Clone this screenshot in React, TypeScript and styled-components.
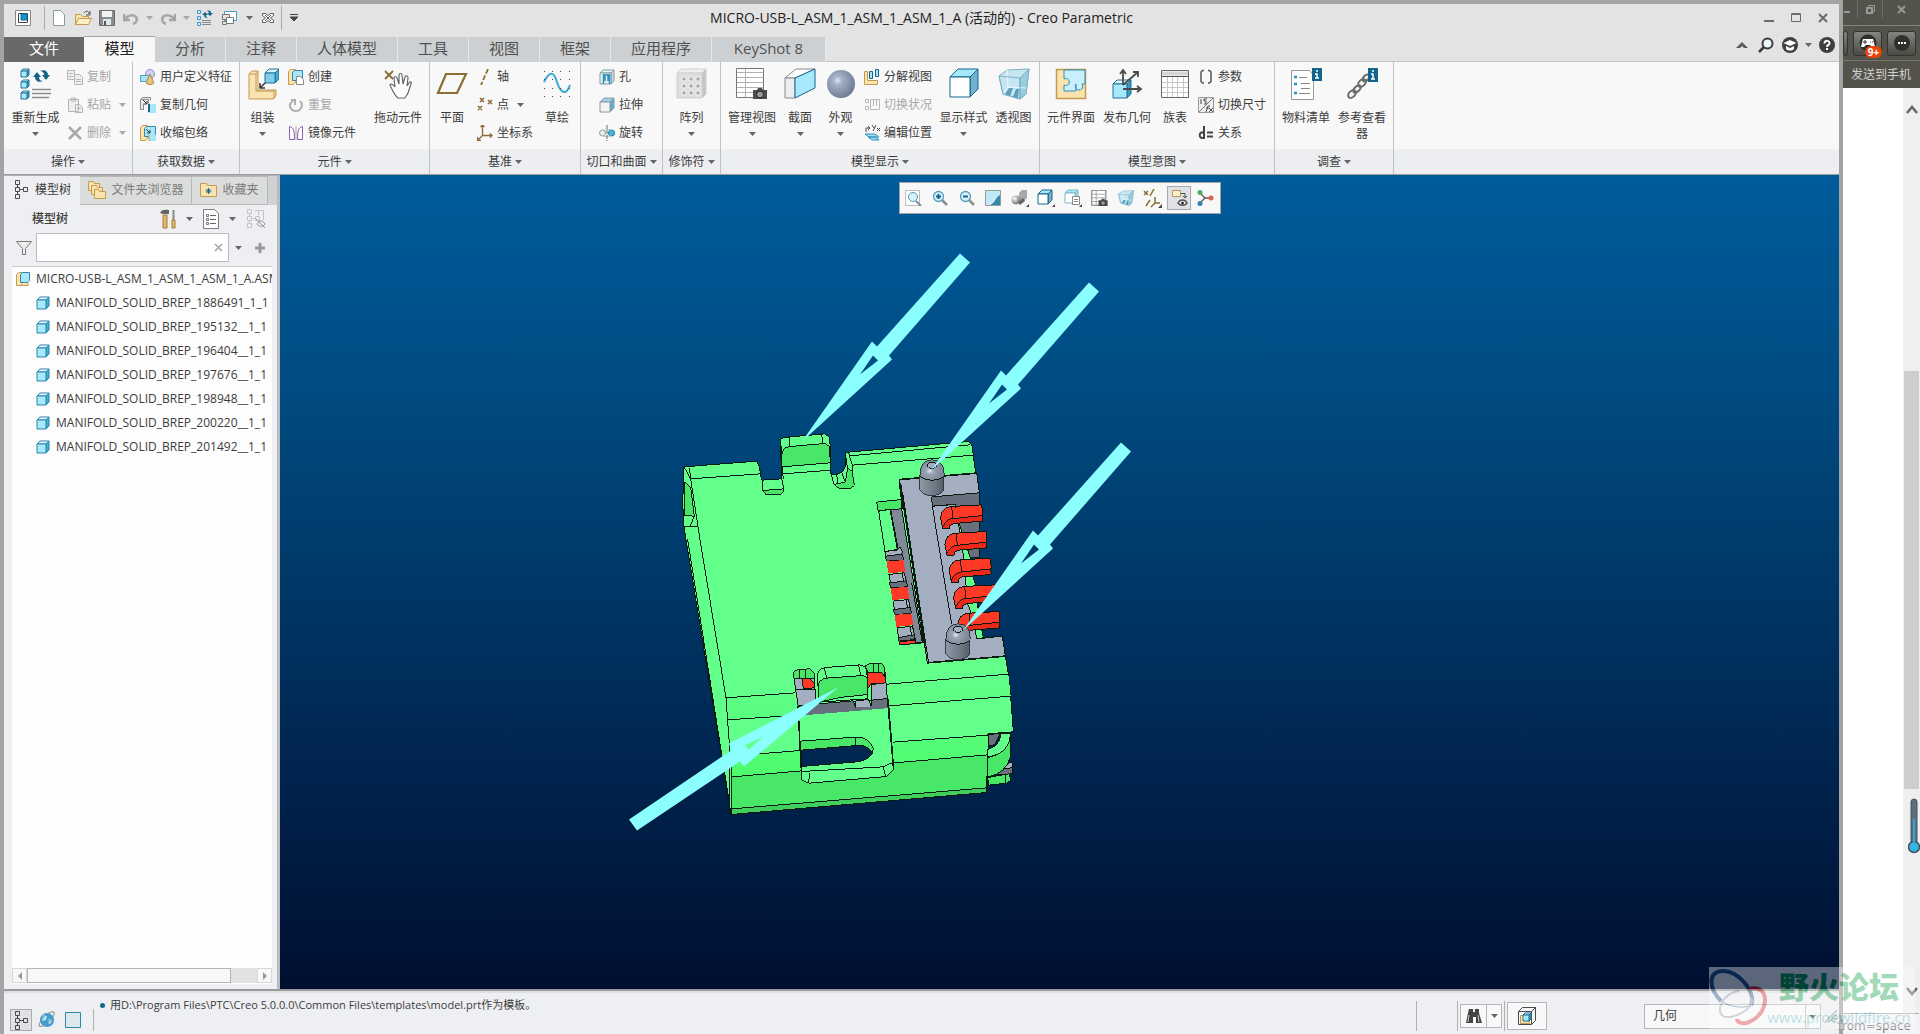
import React from 'react';
import styled, { createGlobalStyle } from 'styled-components';

const GlobalStyle = createGlobalStyle`
  *, *::before, *::after { box-sizing: border-box; }
  body { margin: 0; overflow: hidden; }
  body, button, input, select {
    font-family: "Open Sans", "Noto Sans CJK SC", sans-serif;
    font-size: 12px;
    line-height: 16px;
    color: #3c3c3c;
  }
  button { border: 0; padding: 0; background: none; cursor: default; }
  ul { list-style: none; margin: 0; padding: 0; }
  svg { display: block; flex: none; }
`;

/* ---------- icons ---------- */

type CubeProps = { x: number; y: number; w: number; d: number; f?: string; t?: string; r?: string; s?: string; sw?: number };
const Cube = ({ x, y, w, d, f = '#a8e8fa', t = '#e2f7fe', r = '#46acd2', s = '#1f7396', sw = 1 }: CubeProps) => (
  <g stroke={s} strokeWidth={sw} strokeLinejoin="round">
    <path d={`M${x} ${y + d}l${d} ${-d}h${w}l${-d} ${d}z`} fill={t} />
    <path d={`M${x + w} ${y + d}l${d} ${-d}v${w}l${-d} ${d}z`} fill={r} />
    <path d={`M${x} ${y + d}h${w}v${w}h${-w}z`} fill={f} />
  </g>
);

const sand = { fill: '#fbe3b0', stroke: '#c29a50' };
const line = { fill: 'none', stroke: '#4a4a4a' };
const brown = '#8b6c33';
const blue = '#14658a';
const Camera = () => (
  <g><path d="M18 22h4l1-2h4l1 2h4v9H18z" fill="#4c4c4c" /><circle cx="25" cy="26.500" r="3.500" fill="#999" stroke="#222" /></g>
);
const Lens = ({ sign = '' }: { sign?: string }) => (
  <g fill="none">
    <path d="M10 10l5 5" stroke="#8d8d8d" strokeWidth="2.500" />
    <circle cx="6.500" cy="6.500" r="5" fill="#d9f1fb" stroke="#5b9fc0" strokeWidth="1.300" />
    {sign && <path d={sign} stroke={blue} strokeWidth="2" />}
  </g>
);
const Nodes = ({ c = '#4a4a4a' }: { c?: string }) => (
  <g fill="none" stroke={c}><path d="M2.500.500h4v4h-4zM2.500 7.500h4v4h-4zM2.500 14.500h4v4h-4zM10.500 7.500h4v4h-4z" /><path d="M4.500 5v2M4.500 12v2M7 9.500h3" /></g>
);
const Glass = () => (
  <g stroke="#7fb0c6" strokeLinejoin="round">
    <path d="M1 8L9 2l22-1-3 25-6 5-17-5z" fill="#c6e6f2" />
    <path d="M22 10l9-9-3 25-6 5z" fill="#9accdf" />
    <path d="M9 2l1 17 18 1M10 19l-5 7" fill="none" stroke="#eafaff" />
    <path d="M1 8l21 2v21L5 26zM22 10l9-9" fill="none" />
    <path d="M7 26l4-6h4l-3 8zM15 29l3-8h3l-1 9z" fill="#5f9fbb" stroke="none" />
  </g>
);

const icons: Record<string, [number, number, React.ReactNode]> = {
  app: [16, 16, <g><path d="M.5.500h15v15H.5z" fill="#fff" stroke="#888" /><path d="M3.500 3.500h9v9h-9z" fill="none" stroke="#444" /><path d="M6 4h6v6H6z" fill="#0a9be0" stroke="#17648c" /></g>],
  newFile: [16, 18, <path d="M2.500 1.500h7l4 4v11h-11z" fill="#fff" stroke="#8a9aa5" />],
  open: [18, 18, <g><path d="M1.500 5.500h5l2 2h6v8h-13z" {...sand} /><path d="M1.500 15.500l3-6h13l-3 6z" fill="#fdeec6" stroke="#c29a50" /><path d="M10 4c2-3 5-2 5 1M16 2v4h-4" {...line} /></g>],
  save: [16, 16, <g><path d="M.5.500h15v15H.5z" fill="#8c8c8c" stroke="#6b6b6b" /><path d="M3 1h10v6H3z" fill="#f2f2f2" /><path d="M4 9h8v6H4z" fill="#dce8ee" /><path d="M5 11h2v4H5z" fill="#555" /></g>],
  undo: [16, 14, <path d="M1 3v6h6M2 8c3-4 8-5 11-2 2 3 0 6-3 7" fill="none" stroke="#a5a5a5" strokeWidth="2.500" />],
  redo: [16, 14, <path d="M15 3v6H9M14 8C11 4 6 3 3 6c-2 3 0 6 3 7" fill="none" stroke="#a5a5a5" strokeWidth="2.500" />],
  regenSmall: [16, 16, <g><path d="M.5.500h3v3h-3zM.5 6.500h3v3h-3zM.5 12.500h3v3h-3z" fill="#cdf0fc" stroke="#3a9cc6" /><path d="M5 10.500h9M5 12.500h9M5 14.500h9" stroke="#888" /><path d="M5 5l3-3 3 3H9c0 2 1 2 2 3-3 0-4-1-4-3zM16 3l-3 3-3-3h2c0-1-1-2-2-2 3-1 4 0 4 2z" fill={blue} /></g>],
  windows: [16, 16, <g stroke="#777"><path d="M3.500 1.500h12v9h-12z" fill="#fff" stroke="#45a3c8" /><path d="M1.500 4.500h7v5h-7zM1.500 11.500h4v3h-4z" fill="#e5e5e5" /><path d="M5.500 7.500h7v6h-7z" fill="#fff" /></g>],
  closeWin: [14, 12, <path d="M1.500 1.500h3l2.500 2 2.500-2h3v2l-3 2.500 3 2.500v2h-3L7 8.500l-2.500 2h-3v-2l3-2.500-3-2.500zM4 3l6 6M10 3L4 9" fill="#fff" stroke="#5a5a5a" />],
  customize: [10, 8, <path d="M1 .5h8M1 3h8L5 7z" fill="#444" stroke="#444" />],
  min: [10, 10, <path d="M0 8h10" stroke="#6b6b6b" strokeWidth="2" />],
  max: [12, 10, <path d="M1.500.500h9v8h-9zM1 1.500h10" fill="none" stroke="#6b6b6b" />],
  close: [10, 10, <path d="M1 1l8 8M9 1L1 9" stroke="#6b6b6b" strokeWidth="2" />],
  collapse: [12, 8, <path d="M0 7l6-6 6 6H8L6 5 4 7z" fill="#5a5a5a" />],
  search: [16, 16, <g><circle cx="9.500" cy="6.500" r="5" fill="#eef6fa" stroke="#3a3a3a" strokeWidth="2" /><path d="M6 10l-5 5" stroke="#3a3a3a" strokeWidth="2.500" /></g>],
  learn: [16, 16, <g><circle cx="8" cy="8" r="8" fill="#3f3f3f" /><path d="M1.500 6L8 3l6.500 3L8 9z" fill="#fff" /><path d="M4 9l4 2 4-2v3c-2 2-6 2-8 0z" fill="#fff" /></g>],
  help: [16, 16, <g><circle cx="8" cy="8" r="8" fill="#3f3f3f" /><path d="M5.500 6.500c0-4 5.500-3 5 0-.5 1.500-2.500 1.500-2.500 3.500M8 11v2" fill="none" stroke="#fff" strokeWidth="2" /></g>],

  regen: [32, 32, <g><Cube x={1} y={1} w={6} d={2} /><Cube x={1} y={12} w={6} d={2} /><Cube x={1} y={23} w={6} d={2} /><path d="M12 21.500h19M12 25.500h19M12 29.500h17" stroke="#8c8c8c" strokeWidth="1.500" /><path d="M13 9l4-5 4 5h-2c0 3 2 4 4 4-4 2-8 0-8-4zM30 7l-4 5-4-5h2c0-3-2-4-4-4 4-2 8 0 8 4z" fill={blue} /></g>],
  copy: [16, 16, <g fill="#eee" stroke="#b5b5b5"><path d="M.5 1.500h7v9h-7zM7.500 5.500h5l3 3v7h-8z" /><path d="M2 4.500h4M2 7.500h4M9 10.500h5M9 12.500h5" /></g>],
  paste: [16, 16, <g fill="#eee" stroke="#b5b5b5"><path d="M1.500 2.500h10v12h-10zM4.500 1h4v3h-4zM8.500 7.500h4l3 3v5h-7z" /><path d="M10 11.500h4" /></g>],
  remove: [16, 16, <path d="M2 2l12 12M14 2L2 14" stroke="#a8a8a8" strokeWidth="2.500" />],
  udf: [16, 16, <g><circle cx="10" cy="5" r="4.500" fill="#cfd2f4" stroke="#8890c4" /><path d="M.5 6.500h9v6h-9z" fill="#a8e2f6" stroke="#4aa0c0" /><path d="M10 5l4 9c-2 2-6 2-8 0z" fill="#e4c385" stroke="#b08c48" /></g>],
  copyGeom: [16, 16, <g><path d="M.5 2.500l2-2h8v3M.5 2.500h8v4M.5 2.500v10h3v-6" fill="#e9e9e9" stroke="#8b8b8b" /><path d="M3 3l4 4M7 4v3H4" stroke="#333" fill="none" /><path d="M8 7h8v9H8z" fill="#a8e6fa" /><path d="M9 7v8" stroke={blue} strokeWidth="2" /></g>],
  shrink: [16, 16, <g><path d="M.5 2.500l2-2h5v13l-2 2h-5z" {...sand} /><path d="M4.500 3.500l2-2h9v8l-2 2h-9z" fill="#a8e6fa" stroke="#3789aa" /><path d="M6 4l4 4M10 5v3H7" stroke="#333" fill="none" /><path d="M9 10h7v6H9z" fill="#a8e6fa" /><path d="M9 10v6" stroke="#c29a50" /></g>],
  assemble: [32, 32, <g strokeLinejoin="round"><path d="M2 6l3-3h6v19h18v6l-3 3H2z" {...sand} /><path d="M2 6h7v17h18v8M9 6l2-3M9 23l2-1M27 23l2-1" fill="none" stroke="#c29a50" /><Cube x={18} y={1} w={10} d={4} f="#7fcdea" /><path d="M18 15l-4 4M13 15v5h5" fill="none" stroke="#333" strokeWidth="1.500" /></g>],
  create: [16, 16, <g><path d="M.5 2.500l2-2h5v13l-2 2h-5z" {...sand} /><path d="M4.500 3.500l2-2h8v8l-2 2h-8z" fill="#a8e6fa" stroke="#3789aa" /><path d="M8.500 7.500h4l3 3v5h-7z" fill="#fff" stroke="#8a8a8a" /></g>],
  repeat: [16, 16, <path d="M5 4c-6 4-2 10 3 10s8-6 4-10M3 3h4v5" fill="none" stroke="#b0b0b0" strokeWidth="2" />],
  mirror: [16, 16, <g fill="#fff" stroke="#8a5fb0"><path d="M1.500 1.500c4 1 5 4 5 13h-5zM14.500 1.500c-4 1-5 4-5 13h5z" /><path d="M8 1v14" stroke="#aaa" /></g>],
  drag: [32, 32, <g><path d="M3 3l8 8M11 3l-8 8" stroke={brown} strokeWidth="1.800" /><path d="M8 17c1-2 4 0 5 2l-1-9c0-2 2-2 3 0l2 6V7c0-2 3-2 3 0l1 9 2-7c1-2 3-1 3 1l-1 8 2-3c1-2 3-1 2 1l-3 9c-1 2-2 3-3 5h-7c-4-3-6-9-8-13z" fill="#fff" stroke="#666" strokeWidth="1.200" /></g>],
  plane: [32, 32, <path d="M10 6h20l-9 19H2z" fill="none" stroke={brown} strokeWidth="2.200" />],
  axis: [16, 16, <path d="M11 0L4 16" stroke={brown} strokeWidth="1.800" strokeDasharray="5 2" />],
  point: [16, 16, <path d="M3 1l4 4M7 1L3 5M11 3l4 4M15 3l-4 4M1 9l4 4M5 9l-4 4" stroke={brown} strokeWidth="1.600" />],
  csys: [16, 16, <path d="M5.500 0v10.500H15M5.500 10.500l-5 5M3.500 2l2-2 2 2M13 8.500l2 2-2 2M.5 12v3.500H4" fill="none" stroke={brown} strokeWidth="1.300" />],
  sketch: [32, 32, <g><path d="M3 14C9 2 13 4 16 14s9 15 13 3" fill="none" stroke="#39a9da" strokeWidth="2" />{[3, 11, 19, 28].map(x => [3, 11, 20, 28].map(y => <path key={`${x}-${y}`} d={`M${x} ${y}h1v1h-1z`} fill="#444" />))}</g>],
  hole: [16, 16, <g><Cube x={1} y={1} w={11} d={3} f="#e8eef2" r="#ccd6dc" s="#8a9aa4" /><path d="M4.500 15V6h6v9M6 5v7M9 5v7" fill="none" stroke="#2b94c0" strokeWidth="1.500" /></g>],
  extrude: [16, 16, <g><Cube x={1} y={1} w={10} d={4} f="#f4f4f4" t="#9ed3ea" r="#62aed0" s="#8a9aa4" /></g>],
  revolve: [16, 16, <g><circle cx="3.500" cy="8" r="3" fill="#eee" stroke="#999" /><circle cx="12.500" cy="8" r="3" fill="#4db5dc" stroke="#23799c" /><path d="M4 6c4-3 6-1 9-1M4 11c3 1 6 0 8 0" fill="none" stroke="#8ccbe4" /><path d="M8 0v16" stroke="#666" strokeDasharray="4 1" /></g>],
  pattern: [32, 32, <g><Cube x={1} y={1} w={25} d={4} f="#dedede" t="#efefef" r="#c4c4c4" s="#d0d0d0" />{[6, 13, 20].map(x => [9, 16, 23].map(y => <path key={`${x}-${y}`} d={`M${x} ${y}h4v4h-4z`} fill="#a6a6a6" stroke="#f4f4f4" />))}</g>],
  manage: [34, 32, <g><path d="M1.500.500h27v29h-27z" fill="#fff" stroke="#777" /><path d="M2 4.500h26M2 9.500h26M2 14.500h26M2 19.500h26M2 24.500h26M10.500 1v28" stroke="#b0b0b0" /><Camera /></g>],
  section: [32, 32, <g stroke="#888" strokeLinejoin="round"><path d="M1 10L12 1h19L11 10z" fill="#fff" /><path d="M1 10h10v20H1z" fill="#ededed" /><path d="M11 10L31 1v19L11 30z" fill="#a8e8fc" stroke={blue} /></g>],
  appearance: [32, 32, <g><radialGradient id="ball" cx=".38" cy=".38" r=".65"><stop offset="0" stopColor="#dfe6ee" /><stop offset=".25" stopColor="#a3b2c6" /><stop offset="1" stopColor="#6c7b90" /></radialGradient><circle cx="16" cy="16" r="14" fill="url(#ball)" /></g>],
  explode: [16, 16, <g><path d="M.5 2.500h3v9h10v4H.5z" {...sand} /><path d="M5.500 2.500h3v7h-3zM11.500.500h3v7h-3z" fill="#a8e2f6" stroke={blue} /></g>],
  toggle: [16, 16, <g fill="none" stroke="#b8b8b8"><path d="M1.500 2.500h3v3h-3zM1.500 9.500h3v3h-3zM6.500 2.500h9v10h-9zM9.500 3v6M12.500 3v6" /></g>],
  editPos: [16, 16, <g><path d="M1 9h10l4 3H5zM4 12h8l3 3H8z" fill="#9edcf2" stroke="#2e92b8" /><path d="M2 7V3h3M4 1l2 2-2 2M8 0l2 3M12 0L9 6M13 3l3 3M16 3l-3 3" {...line} /></g>],
  display: [32, 32, <Cube x={2} y={1} w={20} d={8} f="#fff" t="#a8e8fc" r="#73b2cf" s={blue} />],
  perspective: [32, 32, <Glass />],
  compInterface: [32, 32, <g><path d="M1.500 1.500h29v29h-29z" {...sand} strokeWidth="1.500" /><path d="M9 2h21v14h-3c4 8-10 8-6 0v7H9v-6c7 3 7-9 0-6z" fill="#c9effd" stroke="#2d8fb5" /></g>],
  publish: [32, 32, <g><Cube x={2} y={12} w={14} d={4} f="#a8e8fc" r="#3b9cc4" /><path d="M12 17V2M9 6l3-4 3 4M12 17L27 4M22 4h5v5M12 21h18M26 18l4 3-4 3" {...line} strokeWidth="1.800" /></g>],
  family: [32, 32, <g><path d="M2.500 2.500h27v27h-27z" fill="#fff" stroke="#666" /><path d="M3 5.500h26" stroke="#d5d5d5" strokeWidth="4" /><path d="M3 8.500h26" stroke="#555" /><path d="M3 14.500h26M3 19.500h26M3 24.500h26M8.500 9v20M13.500 9v20M18.500 9v20M24.500 9v20" stroke="#c8c8c8" /></g>],
  params: [16, 16, <path d="M6 1.500H4.500L3 3v9.500L4.500 14H6M10 1.500h1.500L13 3v9.500L11.500 14H10" fill="none" stroke="#555" strokeWidth="1.500" />],
  dims: [16, 16, <g><path d="M.5.500h15v15H.5z" fill="#eee" stroke="#999" /><path d="M15 1L1 15" stroke="#777" /><path d="M3 2v5M6 2h3M6 2v2h2v3H6M8 15l2-6h2M8 11h3M11 11l4 4M15 11l-4 4" {...line} /></g>],
  relations: [16, 16, <path d="M6 1v13M6 8c-5-3-6 6-1 5h1M9 7.500h6M9 11.500h6" fill="none" stroke="#444" strokeWidth="2" />],
  bom: [34, 32, <g><path d="M2.500 2.500h18l4 5v24h-22z" fill="#fff" stroke="#999" /><path d="M5 9h3M5 16h3M5 25h3" stroke="#2596c6" strokeWidth="2.500" /><path d="M10 9.500h8M12 15.500h9M12 20.500h9M10 25.500h11" stroke="#888" /><path d="M23 0h10v13H23z" fill={blue} /><path d="M27 3h2M26 6h2v4M26 10h4" stroke="#fff" strokeWidth="1.500" fill="none" /></g>],
  viewer: [34, 32, <g fill="none" stroke="#6b6b6b" strokeWidth="2"><ellipse cx="7" cy="26" rx="4.500" ry="3" transform="rotate(-45 7 26)" /><ellipse cx="12" cy="21" rx="4.500" ry="2.500" transform="rotate(-45 12 21)" /><ellipse cx="17" cy="15" rx="4.500" ry="3" transform="rotate(-45 17 15)" /><ellipse cx="21" cy="10" rx="4" ry="2.500" transform="rotate(-45 21 10)" /><path d="M23 0h10v14H23z" fill={blue} stroke="none" /><path d="M27 3h2M26 6h2v5M26 11h4" stroke="#fff" strokeWidth="1.500" /></g>],

  nodes: [16, 19, <Nodes />],
  folders: [20, 20, <g {...sand}><path d="M1.500 1.500h5l1 2h5v7h-11z" /><path d="M4.500 5.500h5l1 2h5v7h-11z" /><path d="M7.500 9.500h4l1 2h6v7h-11z" /></g>],
  favorite: [18, 16, <g><path d="M.5 1.500h6l1 2h9v11H.5z" {...sand} /><path d="M8.500 6v6M5.500 9h6M6.500 7l4 4M10.500 7l-4 4" stroke={blue} /></g>],
  hammer: [18, 20, <g><path d="M1 4c1-3 4-4 9-3v4H4z" fill="#666" /><path d="M4 6h4v13H4z" fill="#e3b866" stroke="#a67c38" /><path d="M14.500 1v10" stroke="#888" strokeWidth="2" /><path d="M13 11h3v8h-3z" fill="#e3b866" stroke="#a67c38" /></g>],
  list: [16, 20, <g><path d="M.5.500h11l4 4v15H.5z" fill="#fff" stroke="#7d7d7d" /><path d="M7 6.500h6M7 10.500h6M7 14.500h6" stroke="#666" /><path d="M3.500 5.500h2v2h-2zM3.500 9.500h2v2h-2zM3.500 13.500h2v2h-2z" fill="none" stroke="#777" /></g>],
  hide: [22, 20, <g><Nodes c="#c4c4c4" /><path d="M10 1.500h8.500V11M13.500 2v4" fill="none" stroke="#c4c4c4" /><path d="M12 15c2-4 6-4 8 0-2 3-6 3-8 0zM11 10l9 9" fill="none" stroke="#999" /></g>],
  filter: [16, 16, <path d="M.5 1.500h15l-6 7v6h-3v-6z" fill="#eee" stroke="#777" />],
  clear: [9, 9, <path d="M1 1l7 7M8 1L1 8" stroke="#a5a5a5" strokeWidth="1.500" />],
  plus: [12, 12, <path d="M6 1v10M1 6h10" stroke="#999" strokeWidth="3" />],
  asm: [14, 14, <g><path d="M.5 2.500l2-2h4v11l-2 2h-4zM1 13.500h11v-3" {...sand} /><path d="M4.500 2.500l2-2h7v8l-2 2h-7z" fill="#a8e6fa" stroke="#2f86aa" /></g>],
  part: [14, 14, <Cube x={1} y={1} w={9} d={3} s="#2784ac" />],
  globe: [18, 18, <g><circle cx="9" cy="9" r="7" fill="#3ba1d4" /><path d="M5 4l4 1-1 4-4 1zM11 8l3 1-2 4-2-1z" fill="#bfe6f6" /><path d="M1 15C5 18 18 6 16 1c-5-2-15 8-15 14z" fill="none" stroke="#888" /></g>],
  pane: [16, 16, <g><path d="M.5.500h15v15H.5z" fill="#dde8ee" stroke="#2f86aa" /></g>],
  binoculars: [18, 16, <g fill="#444"><path d="M4 1h4v3h2V1h4v4l3 10h-6V9H8v6H1L3 5z" /><path d="M4 7l-1 7M13 7l1 7" stroke="#c8c8c8" /></g>],
  boxSel: [20, 20, <g {...line}><path d="M1.500 5.500l4-4h13v13l-4 4h-13zM1.500 5.500h13v13M14.500 5.500l4-4" /><path d="M3.500 9.500h9v8h-9z" {...sand} /><Cube x={6} y={7} w={6} d={2} /></g>],

  refit: [18, 16, <g><path d="M.5.500h14v15H.5z" fill="#fff" stroke="#bbb" /><circle cx="8" cy="7" r="4.500" fill="#d9f1fb" stroke="#4f9bbc" /><path d="M11 11l5 5" stroke="#888" strokeWidth="2" /></g>],
  zoomIn: [16, 16, <Lens sign="M4 6.500h5M6.500 4v5" />],
  zoomOut: [16, 16, <Lens sign="M4 6.500h5" />],
  repaint: [16, 16, <g><path d="M.5.500h15v15H.5z" fill="#fff" stroke="#999" /><path d="M1 1h14v6C10 7 10 13 3 15H1z" fill="#bfe9f7" /><path d="M15 5v10H5C10 13 10 8 15 5z" fill="#3288aa" /></g>],
  shading: [18, 18, <g><radialGradient id="grey" cx=".35" cy=".35"><stop offset="0" stopColor="#fff" /><stop offset="1" stopColor="#8d8d8d" /></radialGradient><path d="M8 4l3-3h5v8l-3 3H8z" fill="#a8a8a8" /><circle cx="5" cy="11" r="4.500" fill="url(#grey)" /><path d="M7 13l5-4 2 3-5 4z" fill="#666" /><path d="M18 18h-3l3-3z" fill="#444" /></g>],
  styleBox: [18, 18, <g><Cube x={1} y={1} w={10} d={4} f="#fff" t="#a8e8fc" r="#73b2cf" s={blue} /><path d="M18 18h-3l3-3z" fill="#444" /></g>],
  saved: [18, 18, <g><Cube x={1} y={1} w={10} d={3} f="#fff" t="#a8e8fc" r="#a8d6e6" s="#7fb6ca" /><path d="M8.500 7.500h7v8h-7z" fill="#fff" stroke="#888" /><path d="M10 10.500h4M10 12.500h4" stroke="#888" /><path d="M18 18h-3l3-3z" fill="#444" /></g>],
  viewMgr: [17, 17, <g transform="scale(.52)"><path d="M1.500.500h27v29h-27z" fill="#fff" stroke="#777" strokeWidth="2" /><path d="M2 8h26M2 15h26M2 22h26M10 1v28" stroke="#aaa" strokeWidth="2" /><g transform="translate(-8 -8) scale(1.250)"><Camera /></g></g>],
  glass: [16, 16, <g transform="scale(.5)"><Glass /></g>],
  datum: [19, 19, <g><path d="M1 2l4 4M5 2L1 6M11 0L7 7M12 8v6h5M12 14l-4 4M7 11l-4 6" fill="none" stroke={brown} strokeWidth="1.500" /><path d="M19 19h-4l4-4z" fill="#444" /></g>],
  annot: [18, 18, <g><path d="M2.500 1.500h8v6h-8z" fill="#fdf0c4" stroke="#b59a60" /><path d="M11 4.500h4v4M13 7l2 2 2-2" {...line} /><path d="M8 14c2-4 7-4 9 0-2 3-7 3-9 0z" fill="#fff" stroke="#555" strokeWidth="1.500" /><circle cx="12.500" cy="14" r="1.500" fill="#333" /></g>],
  spin: [18, 18, <g><path d="M4 4l5 5-5 5M9 9h6" fill="none" stroke="#555" strokeWidth="1.300" /><circle cx="4" cy="3.500" r="2.500" fill="#4fae62" /><circle cx="4" cy="14.500" r="2.500" fill="#2f83b0" /><circle cx="15" cy="9" r="2.500" fill="#e2624e" /></g>],
};

const Icon = ({ name }: { name: string }) => {
  const [w, h, body] = icons[name];
  return <svg width={w} height={h} viewBox={`0 0 ${w} ${h}`} aria-hidden="true">{body}</svg>;
};

const Caret = ({ c = '#666' }: { c?: string }) => (
  <svg width="7" height="4" viewBox="0 0 7 4" aria-hidden="true"><path d="M0 0h7L3.500 4z" fill={c} /></svg>
);

/* ---------- frame ---------- */

const Screen = styled.div`
  display: flex;
  height: 100vh;
  position: relative;
  background: #fff;
`;
const CreoWindow = styled.main`
  flex: 1;
  min-width: 0;
  display: flex;
  flex-direction: column;
  border: 4px solid #a3a3a3;
  border-bottom: 0;
  background: #eeeff2;
`;
const TitleBar = styled.header`
  height: 33px;
  padding-bottom: 5px;
  display: grid;
  grid-template-columns: 1fr auto 1fr;
  align-items: center;
  background: #e3e3e3;
`;
const Title = styled.h1`
  margin: 0;
  font-size: 14px;
  font-weight: 400;
  color: #222;
`;
const QuickBar = styled.div`
  display: flex;
  align-items: center;
`;
const QuickButton = styled.button<{ $w?: number }>`
  width: ${p => p.$w ?? 24}px;
  height: 24px;
  display: flex;
  align-items: center;
  justify-content: center;
`;
const QuickLine = styled.span`
  width: 1px;
  height: 24px;
  margin: 0 2px;
  background: #aaa;
`;
const WindowButtons = styled(QuickBar)`
  justify-content: flex-end;
  padding-right: 3px;
`;

const TabBar = styled.nav`
  height: 25px;
  display: flex;
  background: #e3e3e3;
  box-shadow: inset 0 -1px #c6c6c6;
`;
const RibbonTab = styled.button<{ $w: number; $kind?: string }>`
  width: ${p => p.$w}px;
  padding-bottom: 3px;
  font-size: 15px;
  line-height: 22px;
  color: ${p => (p.$kind === 'file' ? '#fff' : p.$kind === 'active' ? '#222' : '#505050')};
  background: ${p => (p.$kind === 'file' ? '#696969' : p.$kind === 'active' ? '#f8f8f8' : '#cdd0d3')};
  border-right: ${p => (p.$kind ? '0' : '1px solid #e8e8e8')};
  box-shadow: ${p => (p.$kind === 'active' ? '0 -1px #a3a3a3' : 'none')};
`;
const TabTools = styled(QuickBar)`
  margin-left: auto;
  height: 16px;
`;

const Ribbon = styled.section`
  display: flex;
  height: 113px;
  background: linear-gradient(#f8f8f8 87px, #edeef1 87px);
  border-bottom: 1px solid #9d9d9d;
`;
const Group = styled.div<{ $w: number }>`
  width: ${p => p.$w}px;
  display: flex;
  flex-direction: column;
  border-right: 1px solid #bfc2c5;
`;
const GroupBody = styled.div<{ $pad?: number }>`
  height: 87px;
  display: flex;
  padding-left: ${p => p.$pad ?? 0}px;
`;
const GroupName = styled.button`
  height: 25px;
  display: flex;
  align-items: center;
  justify-content: center;
  gap: 3px;
  white-space: nowrap;
`;
const BigButton = styled.button<{ $w: number }>`
  width: ${p => p.$w}px;
  flex: none;
  display: flex;
  flex-direction: column;
  align-items: center;
  padding-top: 6px;

  > svg:first-child { margin-bottom: 10px; }
  > svg + span + svg { margin-top: 6px; }
`;
const Column = styled.div`
  display: flex;
  flex-direction: column;
  padding: 1px 3px 0;
`;
const SmallButton = styled.button<{ $off?: boolean }>`
  height: 28px;
  display: flex;
  align-items: center;
  gap: 4px;
  white-space: nowrap;
  color: ${p => (p.$off ? '#a6a6a6' : 'inherit')};
  > svg:last-child { margin-left: 4px; }
`;
const GroupLine = styled.span`
  width: 1px;
  height: 67px;
  margin: 10px 2px 0 6px;
  background: #dcdcdc;
`;

const Big = ({ icon, label, w, menu }: { icon: string; label: string; w: number; menu?: boolean }) => (
  <BigButton $w={w}><Icon name={icon} /><span>{label}</span>{menu && <Caret />}</BigButton>
);
type SmallDef = [icon: string, label: string, off?: boolean, menu?: boolean];
const Smalls = ({ items }: { items: SmallDef[] }) => (
  <Column>
    {items.map(([icon, label, off, menu]) => (
      <SmallButton key={label} $off={off} disabled={off}>
        <Icon name={icon} /><span>{label}</span>{menu && <Caret c={off ? '#aaa' : '#666'} />}
      </SmallButton>
    ))}
  </Column>
);
const RibbonGroup = ({ name, w, pad, children }: { name: string; w: number; pad?: number; children: React.ReactNode }) => (
  <Group $w={w}>
    <GroupBody $pad={pad}>{children}</GroupBody>
    <GroupName>{name}<Caret /></GroupName>
  </Group>
);

/* ---------- model tree ---------- */

const Workspace = styled.div`
  flex: 1;
  min-height: 0;
  display: flex;
`;
const Side = styled.aside`
  width: 276px;
  display: flex;
  flex-direction: column;
  border-right: 3px solid #b9babd;
`;
const SideTabs = styled.div`
  height: 30px;
  display: flex;
  background: #cfd1d4;
  border-top: 1px solid #b0b0b0;
`;
const SideTab = styled.button<{ $w: number; $active?: boolean }>`
  width: ${p => p.$w}px;
  padding-bottom: 2px;
  display: flex;
  align-items: center;
  justify-content: center;
  gap: ${p => (p.$active ? 6 : 4)}px;
  white-space: nowrap;
  color: ${p => (p.$active ? '#3c3c3c' : '#7a7a7a')};
  background: ${p => (p.$active ? '#eeeff2' : '#dadddb')};
  border: solid #b5b7b9;
  border-width: ${p => (p.$active ? '0' : '1px 1px 1px 0')};
`;
const TreeHeader = styled.div`
  height: 28px;
  display: flex;
  align-items: center;
  padding: 0 8px 0 28px;
`;
const TreeTitle = styled.h2`
  margin: 0 auto 0 0;
  font-size: 12px;
  font-weight: 500;
`;
const FilterRow = styled.div`
  height: 29px;
  display: flex;
  align-items: center;
  padding-left: 12px;
`;
const FilterBox = styled.label`
  width: 193px;
  height: 29px;
  margin-left: 4px;
  padding-right: 5px;
  display: flex;
  align-items: center;
  background: #fff;
  border: 1px solid #b9bcc0;
`;
const FilterInput = styled.input`
  flex: 1;
  min-width: 0;
  border: 0;
  outline: 0;
`;
const TreeBox = styled.div`
  flex: 1;
  min-height: 0;
  margin: 4px 5px 5px 8px;
  padding-bottom: 1px;
  display: flex;
  flex-direction: column;
  background: #fdfdfd;
  border-top: 1px solid #c9cbce;
`;
const TreeList = styled.ul`
  flex: 1;
  min-height: 0;
  overflow: hidden;
`;
const TreeItem = styled.li<{ $depth: number }>`
  height: 24px;
  display: flex;
  align-items: center;
  gap: 6px;
  padding-left: ${p => (p.$depth ? 24 : 4)}px;
  white-space: nowrap;
`;
const HScroll = styled.div`
  height: 15px;
  display: flex;
  background: #e1e2e4;
`;
const HScrollButton = styled.button`
  width: 15px;
  display: flex;
  align-items: center;
  justify-content: center;
  background: #f8f8f8;
  border: 1px solid #d8d8d8;
`;
const HScrollThumb = styled.div`
  width: 204px;
  margin-right: auto;
  background: #f8f8f8;
  border: 1px solid #b5b5b5;
`;

/* ---------- graphics ---------- */

const Viewport = styled.section`
  flex: 1;
  min-width: 0;
  position: relative;
  background: linear-gradient(#005c9b, #004a80 28%, #00315f 58%, #001e46 80%, #000f30);
  > svg { width: 100%; height: 100%; }
`;
const ViewBar = styled.div`
  position: absolute;
  top: 7px;
  left: 50%;
  transform: translateX(-50%);
  width: 322px;
  height: 32px;
  padding: 0 1px;
  display: flex;
  align-items: center;
  justify-content: space-around;
  background: #f8f8f8;
  border: 1px solid #a0a4a8;
`;
const ViewButton = styled.button<{ $on?: boolean }>`
  width: 24px;
  height: 24px;
  display: flex;
  align-items: center;
  justify-content: center;
  background: ${p => (p.$on ? '#e0e1e4' : 'none')};
  border: ${p => (p.$on ? '1px solid #a8aaad' : '0')};
`;

const G = '#62ff8b';
const DG = '#48e767';
const GR = '#a3aec0';
const DK = '#68707d';
const RED = '#ff3926';
const DRED = '#e9291a';

const Pin = () => (
  <g>
    <path d="M210 78V122Q222 139 246 138T281 124V78z" fill="url(#pin)" stroke="#333b42" />
    <path d="M210 78Q209 32 246 31T283 78Q272 92 246 92T210 78z" fill="url(#dome)" stroke="#333b42" />
    <path d="M210 78Q220 92 246 92T283 78" />
    <ellipse cx="246" cy="47" rx="13" ry="9" fill={GR} />
  </g>
);
const Arrow = ({ x, y }: { x: number; y: number }) => (
  <path
    transform={`translate(${x} ${y})`}
    fillRule="evenodd"
    d="M0 0L70-100 75-95 158-188 168-179 87-86 90-82zM58-67L76-81 71-86z"
  />
);

const Model = () => (
  <svg viewBox="280 176 1559 813" role="img" aria-label="MICRO-USB">
    <defs>
      <linearGradient id="pin"><stop offset="0" stopColor="#8d97a5" /><stop offset=".6" stopColor="#707a86" /><stop offset="1" stopColor="#555d67" /></linearGradient>
      <radialGradient id="dome" cx=".4" cy=".55"><stop offset="0" stopColor="#e4ebf3" /><stop offset=".3" stopColor="#9aa5b5" /><stop offset="1" stopColor="#7f8998" /></radialGradient>
      <linearGradient id="band" x1="0" y1="0" x2="0" y2="1"><stop offset="0" stopColor="#62ff8b" /><stop offset="1" stopColor="#4dfb6c" /></linearGradient>
    </defs>
    <g transform="translate(660 240) scale(.333333)" stroke="#0a1a10" strokeWidth="3" shapeRendering="crispEdges" fill="none">
      <path fill={G} d="M72 682L290 665 297 680 305 722 365 718 361 600 370 594 495 583 507 593 511 620 513 703 530 705 545 699 555 685 556 642 565 638 925 606 936 618 947 702 958 765V955H928L935 1010 948 1040 955 1110 970 1195 1027 1190 1036 1250 1045 1304 1052 1370 1060 1477 983 1483 980 1659 213 1725 78 900 72 860 68 790z" />
      <path fill={DG} d="M75 728L92 745 103 830 73 828z" />
      <path d="M72 682L92 718 302 703M92 718L120 900 198 1375 215 1610V1708M84 860L110 862M72 860L90 862 103 830M88 685L92 718M83 900L205 1670" />
      <path fill={DG} d="M309 753L372 748 370 758 362 766H318z" /><path d="M307 722V748L318 766M365 718L372 748" />
      <path fill={DG} d="M366 645Q366 624 390 621L495 612 508 620 511 670 366 682z" />
      <path d="M361 600L366 645M388 592L390 621M485 584L488 612M507 593L511 620M370 703L513 692M366 682L370 718" />
      <path fill={DG} d="M522 735L556 728 563 686 576 695 583 738 570 747H538z" />
      <path d="M513 703L522 735M530 705L534 733M556 642L563 690M565 638L577 677 576 695M570 649L930 616M577 677L940 647M545 699L556 728" />

      <g transform="translate(570 630)">
        <path fill={GR} d="M148 90L380 70 388 130 388 180 325 220 380 568 457 560 466 620 232 640z" />
        <path fill={DK} d="M245 142L388 130V325H358L355 300 328 225 317 165 247 170z" />
        <path fill={G} d="M338 300H352L362 328 367 378 378 410 385 485 400 565 380 567 370 510 352 460 346 380z" />
        <path d="M245 142L247 170 305 525M152 100L232 640M158 130L226 580M165 180L236 640M150 90V118L158 180" />
        <path strokeWidth="5" d="M150 90L212 85M282 79L380 71M232 640L466 620" />
        <path fill={DG} d="M80 158L155 150V178L84 183z" />
        <path fill="#808a97" d="M122 180L155 178 220 580 198 582z" />
        <path fill={G} d="M86 185L120 180 142 300 105 306z" />
        <path fill={GR} d="M105 306L140 302 150 292 158 310 150 318 108 320z" />
        {[0, 1, 2].map(i => (
          <g key={i} transform={`translate(${i * 12} ${i * 80})`}>
            <path fill={DK} d="M106 320L158 314 160 332 110 335z" />
            <path fill={RED} stroke="none" d="M110 336L160 332 166 367 115 372z" />
            <path fill={GR} d="M117 375L163 370 169 396 122 404z" />
            <path d="M156 372L161 396" />
            <path fill={DK} d="M122 404L169 396 171 410 122 415z" />
          </g>
        ))}
        <path fill={RED} d="M147 577L195 572 198 582 149 586z" />
        <path d="M185 400L217 580H198" />
        {[0, 1, 2, 3, 4].map(i => (
          <g key={i} transform={`translate(${i * 13} ${i * 80})`}>
            <path fill={DRED} d="M272 205L278 238H300V228L312 222 398 215 395 190 310 200z" />
            <path fill={RED} d="M272 205Q273 174 305 171L395 166 398 198 312 207Q288 208 282 226L277 230z" />
            <path d="M305 171L309 207" />
          </g>
        ))}
        <path d="M248 170L315 164 318 176" />
        <Pin />
        <g transform="translate(78 492)"><Pin /></g>
      </g>

      <g transform="translate(-120 900)">
        <path stroke="none" fill="url(#band)" d="M320 476L1165 404 1172 470 325 541zM333 650L1103 587V646L336 712z" />
        <path fill={DG} d="M336 712L1103 646 1100 745 336 808z" />
        <path fill="#40ce5c" d="M336 808L1100 745V759L333 825z" />
        <path d="M318 475L525 460M325 541L530 527M333 650L540 633M800 434L1165 404M808 499L1172 470M818 608L1103 587M330 640V825" />
        <path fill={G} d="M533 500L805 480 820 670 820 692 800 711 568 731 545 722z" />
        <path d="M545 696L790 682 820 668M570 702L565 731M790 682L797 711" />
        <path fill={DG} d="M540 605L705 593Q748 590 760 628 757 662 710 667L545 681z" />
        <path fill="#002752" d="M543 632L725 617Q740 619 757 640 744 664 710 667L545 681z" />
        <path d="M705 593L707 618" />
        <path fill={DG} d="M524 419Q510 398 535 390L570 388 583 402V425z" />
        <path d="M540 391V415M557 389V415" />
        <path fill={GR} d="M522 418H582L590 500 535 502z" /><path fill={RED} d="M547 418H570L583 432V445L550 448z" /><path d="M526 450L588 450" />
        <path fill={DG} d="M735 380L750 372 785 371 794 384V412L745 400z" /><path d="M760 372V397M777 372V397" />
        <path fill={RED} d="M742 400L785 398 796 414V432H755L744 445z" />
        <path fill={GR} d="M755 435L798 430 804 500 755 505z" /><path fill={DK} d="M755 482L803 477 804 500 755 504z" />
        <path fill={G} d="M594 440V402Q594 388 618 384L720 376 737 382 742 412V478L597 488z" />
        <path fill={DG} d="M594 440Q596 420 618 416L730 408 742 415V465L660 474 597 488z" />
        <path d="M613 386L620 416M716 377L722 409" />
        <path fill={DK} d="M540 498L700 484 708 508 550 523z" /><path fill={GR} d="M705 485L745 480 755 503 708 508z" />
        <path stroke="none" fill={DK} d="M545 516L804 497 805 506 545 528z" />
        <path d="M535 500L545 722M794 384L820 690" />
        <path fill={DK} d="M1105 584L1140 583 1125 615 1104 620z" />
        <path fill={GR} d="M1150 675L1177 668V685L1145 690z" />
        <path fill={DK} d="M1145 690L1177 684V703L1130 706z" />
        <path fill={DG} d="M1103 655Q1170 640 1172 580V650Q1160 700 1103 713z" />
        <path fill={G} d="M1103 652V630Q1140 620 1143 582H1172Q1168 640 1115 650z" />
        <path fill={DG} d="M1103 714L1168 703 1172 722 1160 731 1106 737z" /><path d="M1158 705V731" />
      </g>
    </g>
    <g fill="#8bfffd">
      <Arrow x={802} y={442} />
      <Arrow x={931} y={471} />
      <Arrow x={963} y={631} />
      <path fillRule="evenodd" d="M838 688L744 767 740 762 637 831 629 820 731 751 729 744zM763 737L745 746 749 750z" />
    </g>
  </svg>
);

/* ---------- status bar ---------- */

const StatusBar = styled.footer`
  height: 45px;
  display: flex;
  align-items: flex-end;
  border-top: 2px solid #98999b;
  padding: 0 0 3px 6px;
  box-shadow: inset 0 2px #dfe0e2;
`;
const StatusButton = styled.button<{ $on?: boolean }>`
  width: 22px;
  height: 22px;
  margin-right: 4px;
  display: flex;
  align-items: center;
  justify-content: center;
  background: ${p => (p.$on ? '#e0e1e4' : 'none')};
  border: ${p => (p.$on ? '1px solid #a8aaad' : '0')};
`;
const StatusLine = styled.span<{ $h: number; $before: number; $after: number }>`
  width: 1px;
  height: ${p => p.$h}px;
  margin: 0 ${p => p.$after}px 0 ${p => p.$before}px;
  background: #aeb0b3;
`;
const Message = styled.p`
  margin: 0;
  align-self: flex-start;
  padding-top: 6px;
  display: flex;
  align-items: center;
  gap: 5px;
  white-space: nowrap;
  font-size: 11px;
`;
const Dot = styled.span`
  width: 5px;
  height: 5px;
  border-radius: 50%;
  background: #14658a;
`;
const StatusRight = styled.div`
  margin-left: auto;
  align-self: stretch;
  display: flex;
  align-items: center;
  padding: 10px 2px 0 0;
`;
const Framed = styled.button<{ $w: number; $h: number }>`
  width: ${p => p.$w}px;
  height: ${p => p.$h}px;
  display: flex;
  align-items: center;
  justify-content: center;
  background: #f8f8f8;
  border: 1px solid #b4b6b9;
  & + & { border-left: 0; }
`;
const SelectWrap = styled.label`
  margin: 0 4px 0 97px;
  position: relative;
  > svg { position: absolute; right: 5px; top: 11px; pointer-events: none; }
`;
const Select = styled.select`
  appearance: none;
  display: block;
  width: 177px;
  height: 25px;
  padding: 0 8px;
  border: 1px solid #b4b6b9;
  border-radius: 0;
  background: linear-gradient(90deg, #f8f8f8 160px, #b4b6b9 160px, #b4b6b9 161px, #f8f8f8 161px);
`;

/* ---------- browser behind the window ---------- */

const Browser = styled.aside`
  width: 77px;
  display: flex;
  flex-direction: column;
`;
const BrowserTop = styled.div`
  height: 88px;
  background: #53534c;
  color: #d0d0cc;
`;
const BrowserControls = styled.div`
  height: 26px;
  display: flex;
  align-items: flex-start;
  border-bottom: 1px solid #85857d;
`;
const BrowserControl = styled.button<{ $w: number }>`
  width: ${p => p.$w}px;
  height: 18px;
  display: flex;
  align-items: center;
  justify-content: center;
  border-right: 1px solid #6d6d65;
  &:last-child { border-right: 0; }
`;
const BrowserTools = styled.div`
  height: 35px;
  display: flex;
  align-items: center;
  gap: 5px;
  border-bottom: 1px solid #77776f;
`;
const BrowserTool = styled.button<{ $w: number }>`
  width: ${p => p.$w}px;
  height: 25px;
  display: flex;
  align-items: center;
  justify-content: center;
  position: relative;
  border: 1px solid #34342f;
  border-radius: 3px;
  background: linear-gradient(#85857f, #4b4b45);
`;
const Badge = styled.span`
  position: absolute;
  right: -1px;
  bottom: -3px;
  width: 17px;
  height: 12px;
  border-radius: 6px;
  background: #e8450c;
  color: #fff;
  font-size: 10px;
  line-height: 12px;
  font-weight: 700;
`;
const SendLink = styled.a`
  display: block;
  padding: 6px 8px;
  color: inherit;
  text-decoration: none;
  white-space: nowrap;
`;
const PageArea = styled.div`
  flex: 1;
  display: flex;
  justify-content: flex-end;
  position: relative;
`;
const VScroll = styled.div`
  width: 17px;
  display: flex;
  flex-direction: column;
  align-items: center;
  padding: 17px 0 38px;
  background: #efefef;
`;
const VThumb = styled.div`
  width: 15px;
  height: 418px;
  margin: 257px 0 auto;
  background: #cdcdcd;
`;
const Thermometer = styled.div`
  position: absolute;
  right: 0;
  top: 710px;
`;
const LinkStatus = styled.div`
  position: absolute;
  left: 0;
  right: 1px;
  bottom: 0;
  height: 21px;
  padding: 4px 8px 0 0;
  display: flex;
  justify-content: flex-end;
  background: #f3f4f8;
  border-top: 1px solid #aaa;
  color: #777;
`;
const LinkText = styled.span`
  font-family: "DejaVu Sans", sans-serif;
  font-size: 12px;
`;

const Watermark = styled.div`
  position: absolute;
  right: 5px;
  bottom: 5px;
  width: 206px;
  height: 62px;
  display: flex;
  opacity: .36;
  background: #fff;
  pointer-events: none;
`;
const MarkText = styled.div`
  flex: 1;
  display: flex;
  flex-direction: column;
  align-items: center;
  white-space: nowrap;
`;
const MarkName = styled.strong`
  font-size: 30px;
  line-height: 40px;
  font-weight: 900;
  color: #009a40;
`;
const MarkUrl = styled.span`
  font-size: 15px;
  line-height: 20px;
  color: #50b8c0;
`;

const quick: [string, number?][] = [['newFile'], ['open'], ['save'], ['undo'], ['caretOff', 13], ['redo'], ['caretOff', 13], ['regenSmall'], ['windows'], ['caret', 16], ['closeWin', 22]];
const tabs: [string, number, string?][] = [['文件', 80, 'file'], ['模型', 71, 'active'], ['分析', 71], ['注释', 71], ['人体模型', 101], ['工具', 71], ['视图', 71], ['框架', 71], ['应用程序', 101], ['KeyShot 8', 114]];
const viewTools = ['refit', 'zoomIn', 'zoomOut', 'repaint', 'shading', 'styleBox', 'saved', 'viewMgr', 'glass', 'datum', 'annot', 'spin'];
const parts = ['1886491_1_1', '195132__1_1', '196404__1_1', '197676__1_1', '198948__1_1', '200220__1_1', '201492__1_1'];

export default function App() {
  return (
    <Screen>
      <GlobalStyle />
      <CreoWindow>
        <TitleBar>
          <QuickBar>
            <QuickButton $w={38} aria-label="Creo"><Icon name="app" /></QuickButton>
            <QuickLine />
            {quick.map(([n, w], i) => (
              <QuickButton key={i} $w={w} aria-label={n}>
                {n.startsWith('caret') ? <Caret c={n === 'caretOff' ? '#aaa' : '#666'} /> : <Icon name={n} />}
              </QuickButton>
            ))}
            <QuickLine />
            <QuickButton $w={20} aria-label="customize"><Icon name="customize" /></QuickButton>
          </QuickBar>
          <Title>MICRO-USB-L_ASM_1_ASM_1_ASM_1_A (活动的) - Creo Parametric</Title>
          <WindowButtons>
            {['min', 'max', 'close'].map(n => <QuickButton key={n} $w={27} aria-label={n}><Icon name={n} /></QuickButton>)}
          </WindowButtons>
        </TitleBar>

        <TabBar>
          {tabs.map(([t, w, kind]) => <RibbonTab key={t} $w={w} $kind={kind}>{t}</RibbonTab>)}
          <TabTools>
            <QuickButton aria-label="collapse"><Icon name="collapse" /></QuickButton>
            <QuickButton aria-label="search"><Icon name="search" /></QuickButton>
            <QuickButton aria-label="learn"><Icon name="learn" /></QuickButton>
            <QuickButton $w={13} aria-label="menu"><Caret /></QuickButton>
            <QuickButton aria-label="help"><Icon name="help" /></QuickButton>
          </TabTools>
        </TabBar>

        <Ribbon>
          <RibbonGroup name="操作" w={129} pad={3}>
            <Big icon="regen" label="重新生成" w={57} menu />
            <Smalls items={[['copy', '复制', true], ['paste', '粘贴', true, true], ['remove', '删除', true, true]]} />
          </RibbonGroup>
          <RibbonGroup name="获取数据" w={107} pad={4}>
            <Smalls items={[['udf', '用户定义特征'], ['copyGeom', '复制几何'], ['shrink', '收缩包络']]} />
          </RibbonGroup>
          <RibbonGroup name="元件" w={190}>
            <Big icon="assemble" label="组装" w={45} menu />
            <Smalls items={[['create', '创建'], ['repeat', '重复', true], ['mirror', '镜像元件']]} />
            <GroupLine />
            <Big icon="drag" label="拖动元件" w={62} />
          </RibbonGroup>
          <RibbonGroup name="基准" w={151}>
            <Big icon="plane" label="平面" w={44} />
            <Smalls items={[['axis', '轴'], ['point', '点', false, true], ['csys', '坐标系']]} />
            <Big icon="sketch" label="草绘" w={42} />
          </RibbonGroup>
          <RibbonGroup name="切口和曲面" w={82} pad={15}>
            <Smalls items={[['hole', '孔'], ['extrude', '拉伸'], ['revolve', '旋转']]} />
          </RibbonGroup>
          <RibbonGroup name="修饰符" w={58}>
            <Big icon="pattern" label="阵列" w={57} menu />
          </RibbonGroup>
          <RibbonGroup name="模型显示" w={319} pad={3}>
            <Big icon="manage" label="管理视图" w={56} menu />
            <Big icon="section" label="截面" w={40} menu />
            <Big icon="appearance" label="外观" w={41} menu />
            <Smalls items={[['explode', '分解视图'], ['toggle', '切换状况', true], ['editPos', '编辑位置']]} />
            <Big icon="display" label="显示样式" w={57} menu />
            <Big icon="perspective" label="透视图" w={43} />
          </RibbonGroup>
          <RibbonGroup name="模型意图" w={235} pad={3}>
            <Big icon="compInterface" label="元件界面" w={56} />
            <Big icon="publish" label="发布几何" w={56} />
            <Big icon="family" label="族表" w={40} />
            <Smalls items={[['params', '参数'], ['dims', '切换尺寸'], ['relations', '关系']]} />
          </RibbonGroup>
          <RibbonGroup name="调查" w={119} pad={3}>
            <Big icon="bom" label="物料清单" w={56} />
            <Big icon="viewer" label="参考查看器" w={56} />
          </RibbonGroup>
        </Ribbon>

        <Workspace>
          <Side>
            <SideTabs>
              <SideTab $w={76} $active><Icon name="nodes" />模型树</SideTab>
              <SideTab $w={112}><Icon name="folders" />文件夹浏览器</SideTab>
              <SideTab $w={76}><Icon name="favorite" />收藏夹</SideTab>
            </SideTabs>
            <TreeHeader>
              <TreeTitle>模型树</TreeTitle>
              <QuickButton aria-label="tools"><Icon name="hammer" /></QuickButton>
              <QuickButton $w={19} aria-label="tools menu"><Caret /></QuickButton>
              <QuickButton aria-label="settings"><Icon name="list" /></QuickButton>
              <QuickButton $w={19} aria-label="settings menu"><Caret /></QuickButton>
              <QuickButton $w={27} aria-label="hide"><Icon name="hide" /></QuickButton>
            </TreeHeader>
            <FilterRow>
              <Icon name="filter" />
              <FilterBox><FilterInput aria-label="filter" /><Icon name="clear" /></FilterBox>
              <QuickButton $w={19} aria-label="filter menu"><Caret /></QuickButton>
              <QuickButton aria-label="add"><Icon name="plus" /></QuickButton>
            </FilterRow>
            <TreeBox>
              <TreeList>
                <TreeItem $depth={0}><Icon name="asm" />MICRO-USB-L_ASM_1_ASM_1_ASM_1_A.ASM</TreeItem>
                {parts.map(p => <TreeItem key={p} $depth={1}><Icon name="part" />MANIFOLD_SOLID_BREP_{p}</TreeItem>)}
              </TreeList>
              <HScroll>
                <HScrollButton aria-label="left"><svg width="4" height="8"><path d="M4 0v8L0 4z" fill="#999" /></svg></HScrollButton>
                <HScrollThumb />
                <HScrollButton aria-label="right"><svg width="4" height="8"><path d="M0 0v8l4-4z" fill="#999" /></svg></HScrollButton>
              </HScroll>
            </TreeBox>
          </Side>
          <Viewport>
            <Model />
            <ViewBar>
              {viewTools.map(n => <ViewButton key={n} $on={n === 'annot'} aria-label={n}><Icon name={n} /></ViewButton>)}
            </ViewBar>
          </Viewport>
        </Workspace>

        <StatusBar>
          <StatusButton $on aria-label="tree"><Icon name="nodes" /></StatusButton>
          <StatusButton aria-label="web"><Icon name="globe" /></StatusButton>
          <StatusButton aria-label="pane"><Icon name="pane" /></StatusButton>
          <StatusLine $h={22} $before={5} $after={6} />
          <Message><Dot />用D:\Program Files\PTC\Creo 5.0.0.0\Common Files\templates\model.prt作为模板。</Message>
          <StatusRight>
            <StatusLine $h={30} $before={7} $after={33} />
            <StatusLine $h={30} $before={7} $after={2} />
            <Framed $w={27} $h={24} aria-label="find"><Icon name="binoculars" /></Framed>
            <Framed $w={15} $h={24} aria-label="find menu"><Caret /></Framed>
            <StatusLine $h={30} $before={2} $after={2} />
            <Framed $w={40} $h={28} aria-label="select box"><Icon name="boxSel" /></Framed>
            <SelectWrap>
              <Select aria-label="几何" defaultValue="几何"><option>几何</option></Select>
              <Caret />
            </SelectWrap>
            <svg width="12" height="12"><path d="M0 12L12 0M4 12l8-8M8 12l4-4" stroke="#aaa" strokeWidth="1.500" /></svg>
          </StatusRight>
        </StatusBar>
      </CreoWindow>

      <Browser>
        <BrowserTop>
          <BrowserControls>
            <BrowserControl $w={15} aria-label="minimize"><svg width="12" height="10"><path d="M0 8h6" stroke="#999" strokeWidth="2" /></svg></BrowserControl>
            <BrowserControl $w={25} aria-label="restore"><svg width="9" height="9" fill="none" stroke="#999"><path d="M2.500 2V.500h6v6H7" /><path d="M1 3h5v5H1z" strokeWidth="2" /></svg></BrowserControl>
            <BrowserControl $w={37} aria-label="close browser"><svg width="9" height="9"><path d="M1 1l7 7M8 1L1 8" stroke="#999" strokeWidth="2" /></svg></BrowserControl>
          </BrowserControls>
          <BrowserTools>
            <BrowserTool $w={5} aria-label="tool" />
            <BrowserTool $w={29} aria-label="games">
              <svg width="18" height="18"><circle cx="9" cy="9" r="8.500" fill="#2f2f2c" /><path d="M4 5h10l2 8h-3l-2-2H7l-2 2H2z" fill="#fff" /><path d="M4 8h4M6 6v4M11 8h1M13 8h1" stroke="#333" /></svg>
              <Badge>9+</Badge>
            </BrowserTool>
            <BrowserTool $w={29} aria-label="more">
              <svg width="18" height="18"><circle cx="9" cy="9" r="8" fill="#2f2f2c" /><path d="M5 9h2M8 9h2M11 9h2" stroke="#fff" strokeWidth="2" /></svg>
            </BrowserTool>
          </BrowserTools>
          <SendLink href="#send">发送到手机</SendLink>
        </BrowserTop>
        <PageArea>
          <VScroll>
            <svg width="12" height="9"><path d="M1 8l5-6 5 6" fill="none" stroke="#666" strokeWidth="2.500" /></svg>
            <VThumb />
            <svg width="12" height="9"><path d="M1 1l5 6 5-6" fill="none" stroke="#666" strokeWidth="2.500" /></svg>
          </VScroll>
          <Thermometer>
            <svg width="12" height="56"><rect x="3" y="1" width="6" height="48" rx="3" fill="#5f6f7a" stroke="#46535c" /><circle cx="6" cy="49" r="5.500" fill="#36b4e4" stroke="#46535c" strokeWidth="1.500" /><path d="M6 21v24" stroke="#2fa5dd" strokeWidth="2" /></svg>
          </Thermometer>
          <LinkStatus><LinkText>from=space</LinkText></LinkStatus>
        </PageArea>
      </Browser>

      <Watermark>
        <svg width="54" height="62" viewBox="0 0 60 62" preserveAspectRatio="xMinYMid slice" overflow="visible" fill="none">
          <path d="M12 34C0 22-2 4 14 4s34 22 28 34" stroke="#1c4a80" strokeWidth="4" />
          <path d="M12 34c8 6 24 8 30 4" stroke="#1c4a80" strokeWidth="1" />
          <path d="M40 22c20-6 22 22 2 32-6 4-14 2-14-2" stroke="#d8242c" strokeWidth="4" />
          <path d="M30 24C14 26 6 44 14 49s34-8 28-18" stroke="#8899aa" strokeWidth="2" />
        </svg>
        <MarkText><MarkName>野火论坛</MarkName><MarkUrl>www.proewildfire.cn</MarkUrl></MarkText>
      </Watermark>
    </Screen>
  );
}
